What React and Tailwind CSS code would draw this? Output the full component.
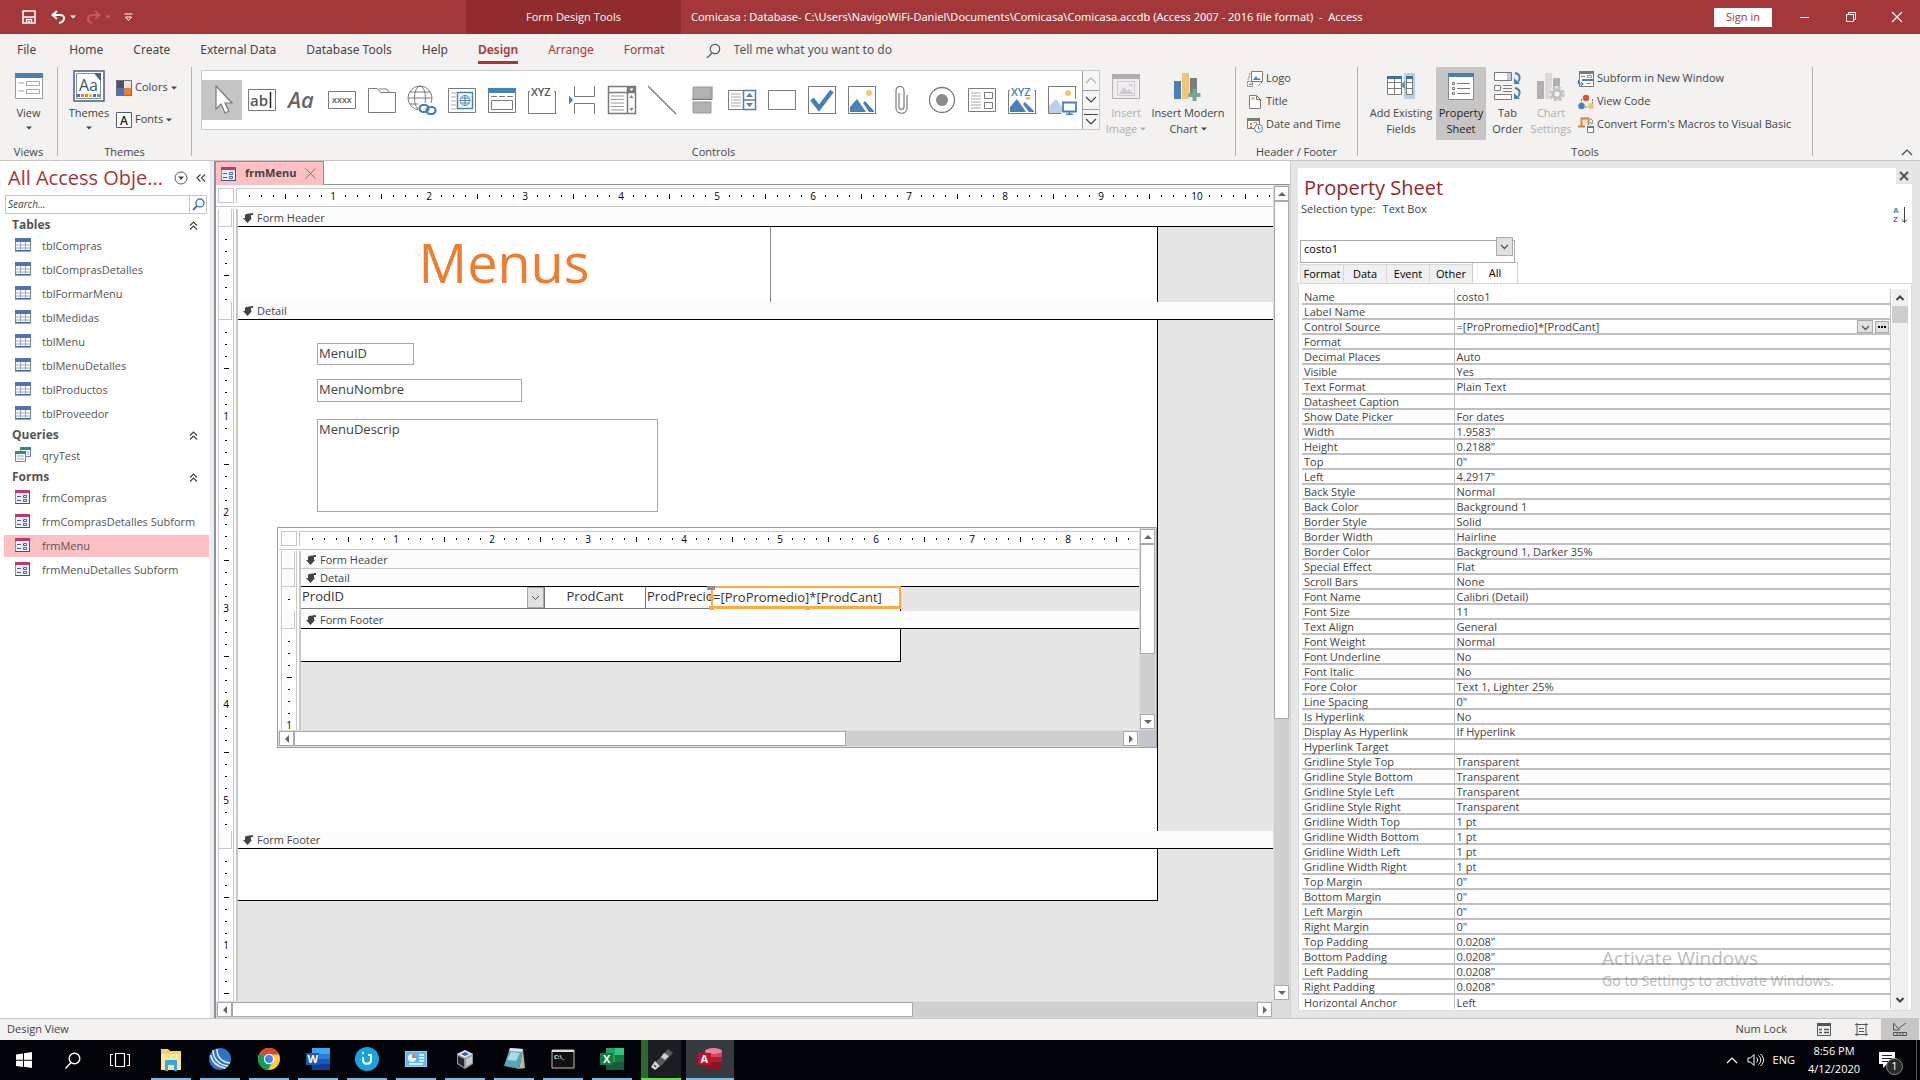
import { useState } from "react";

const TABS = ["File", "Home", "Create", "External Data", "Database Tools", "Help", "Design", "Arrange", "Format"];

const NAV_GROUPS = [
  {
    title: "Tables",
    kind: "table",
    items: ["tblCompras", "tblComprasDetalles", "tblFormarMenu", "tblMedidas", "tblMenu", "tblMenuDetalles", "tblProductos", "tblProveedor"],
  },
  { title: "Queries", kind: "query", items: ["qryTest"] },
  { title: "Forms", kind: "form", items: ["frmCompras", "frmComprasDetalles Subform", "frmMenu", "frmMenuDetalles Subform"] },
];

const PROPERTIES = [
  ["Name", "costo1"],
  ["Label Name", ""],
  ["Control Source", "=[ProPromedio]*[ProdCant]"],
  ["Format", ""],
  ["Decimal Places", "Auto"],
  ["Visible", "Yes"],
  ["Text Format", "Plain Text"],
  ["Datasheet Caption", ""],
  ["Show Date Picker", "For dates"],
  ["Width", '1.9583"'],
  ["Height", '0.2188"'],
  ["Top", '0"'],
  ["Left", '4.2917"'],
  ["Back Style", "Normal"],
  ["Back Color", "Background 1"],
  ["Border Style", "Solid"],
  ["Border Width", "Hairline"],
  ["Border Color", "Background 1, Darker 35%"],
  ["Special Effect", "Flat"],
  ["Scroll Bars", "None"],
  ["Font Name", "Calibri (Detail)"],
  ["Font Size", "11"],
  ["Text Align", "General"],
  ["Font Weight", "Normal"],
  ["Font Underline", "No"],
  ["Font Italic", "No"],
  ["Fore Color", "Text 1, Lighter 25%"],
  ["Line Spacing", '0"'],
  ["Is Hyperlink", "No"],
  ["Display As Hyperlink", "If Hyperlink"],
  ["Hyperlink Target", ""],
  ["Gridline Style Top", "Transparent"],
  ["Gridline Style Bottom", "Transparent"],
  ["Gridline Style Left", "Transparent"],
  ["Gridline Style Right", "Transparent"],
  ["Gridline Width Top", "1 pt"],
  ["Gridline Width Bottom", "1 pt"],
  ["Gridline Width Left", "1 pt"],
  ["Gridline Width Right", "1 pt"],
  ["Top Margin", '0"'],
  ["Bottom Margin", '0"'],
  ["Left Margin", '0"'],
  ["Right Margin", '0"'],
  ["Top Padding", '0.0208"'],
  ["Bottom Padding", '0.0208"'],
  ["Left Padding", '0.0208"'],
  ["Right Padding", '0.0208"'],
  ["Horizontal Anchor", "Left"],
];

const G = "#7a7a7a";
const B = "#4a80b8";
const Y = "#efc77b";

function Svg({ w = 30, h = 30, className = "", children }) {
  return (
    <svg width={w} height={h} viewBox={`0 0 ${w} ${h}`} fill="none" className={`shrink-0 ${className}`} aria-hidden="true">
      {children}
    </svg>
  );
}

function Caret({ className = "" }) {
  return (
    <Svg w={6} h={4} className={className}>
      <path d="M0 0.5h6L3 3.5z" fill="currentColor" />
    </Svg>
  );
}

function Chevron({ className = "", up = false }) {
  return (
    <Svg w={12} h={8} className={className}>
      <path d={up ? "M1 7l5-5 5 5" : "M1 1l5 5 5-5"} stroke="currentColor" strokeWidth="1.2" />
    </Svg>
  );
}

/* ---------- Title bar ---------- */

function TitleBar() {
  return (
    <header className="flex h-[34px] shrink-0 items-stretch bg-[#a4373a] text-[11px] text-white">
      <div className="flex w-[466px] items-center pl-[22px]">
        <button aria-label="Save">
          <Svg w={14} h={14}>
            <path d="M1 1h12v12H1z" stroke="#fff" strokeWidth="1.6" />
            <path d="M1 7h12M4.5 13V9.5h5V13" stroke="#fff" strokeWidth="1.5" />
            <path d="M6 11h2v2H6z" fill="#fff" />
          </Svg>
        </button>
        <button aria-label="Undo" className="ml-[15px] flex items-center gap-[4px]">
          <Svg w={15} h={14}>
            <path d="M6 1L1.5 5 6 9M2 5h7c6 0 5 7-1 8" stroke="#fff" strokeWidth="2" />
          </Svg>
          <Caret />
        </button>
        <button aria-label="Redo" className="ml-[10px] flex items-center gap-[4px] text-[#c0666a]" disabled>
          <Svg w={15} h={14}>
            <path d="M9 1l4.5 4L9 9M13 5H7C1 5 0 11 6 13" stroke="#bd5f62" strokeWidth="2" />
          </Svg>
          <Caret />
        </button>
        <button aria-label="Customize quick access" className="ml-[13px]">
          <Svg w={9} h={9}>
            <path d="M0.5 1h8M1.5 4l3 3.5 3-3.5z" stroke="#fff" />
          </Svg>
        </button>
      </div>
      <div className="flex w-[215px] items-center justify-center bg-[#912b2e]">Form Design Tools</div>
      <h1 className="flex min-w-0 flex-1 items-center pl-[10px] font-['Noto_Sans',sans-serif] whitespace-pre">
        {"Comicasa : Database- C:\\Users\\NavigoWiFi-Daniel\\Documents\\Comicasa\\Comicasa.accdb (Access 2007 - 2016 file format)  -  Access"}
      </h1>
      <div className="flex items-center">
        <button className="h-[19px] w-[58px] bg-white text-[11px] text-[#a4373a]">Sign in</button>
        <button aria-label="Minimize" className="ml-[27px]">
          <Svg w={12} h={12}><path d="M1 6.5h9" stroke="#fff" /></Svg>
        </button>
        <button aria-label="Restore" className="ml-[34px]">
          <Svg w={12} h={12}>
            <path d="M1.5 3.5h7v7h-7zM3.5 3.5v-2h7v7h-2" stroke="#fff" />
          </Svg>
        </button>
        <button aria-label="Close" className="mr-[17px] ml-[34px]">
          <Svg w={12} h={12}><path d="M1 1l10 10M11 1L1 11" stroke="#fff" strokeWidth="1.2" /></Svg>
        </button>
      </div>
    </header>
  );
}

function TabRow() {
  return (
    <nav className="flex h-8 shrink-0 items-center bg-[#f3f2f1] pl-[2px] font-['Noto_Sans',sans-serif] text-xs text-[#444]">
      {TABS.map((tab) => {
        const tool = ["Design", "Arrange", "Format"].includes(tab);
        return (
          <button key={tab} className={`px-[15px] first:pr-[18px] ${tool ? "text-[#a4373a]" : ""}`}>
            <span className={`block h-7 pt-[4px] leading-[20px] ${tab === "Design" ? "border-b-[3px] border-[#a4373a] font-semibold" : ""}`}>
              {tab}
            </span>
          </button>
        );
      })}
      <label className="ml-[26px] flex flex-1 items-center gap-[13px]">
        <Svg w={15} h={15}>
          <circle cx="9" cy="6" r="4.7" stroke="#555" strokeWidth="1.2" />
          <path d="M6 10l-5 5" stroke="#555" strokeWidth="1.2" />
        </Svg>
        <input className="flex-1 bg-transparent outline-none placeholder:text-[#555]" placeholder="Tell me what you want to do" />
      </label>
    </nav>
  );
}

/* ---------- Ribbon ---------- */

function Group({ label, className = "", children }) {
  return (
    <section className={`flex flex-col border-r border-[#b5b3b1] ${className}`}>
      <div className="flex flex-1 items-start">{children}</div>
      <h2 className="h-2 text-center text-[11px] leading-2">{label}</h2>
    </section>
  );
}

function BigButton({ icon, lines, caret, className = "" }) {
  return (
    <button className={`flex h-[73px] flex-col items-center text-[11px] leading-4 ${className}`}>
      <span className="flex h-[38px] items-center">{icon}</span>
      {lines.map((line, i) => (
        <span key={line} className="flex items-center gap-[3px] whitespace-nowrap">
          {line}
          {caret === "inline" && i === lines.length - 1 && <Caret />}
        </span>
      ))}
      {caret === "below" && <Caret className="mt-[5px]" />}
    </button>
  );
}

function SmallButton({ icon, label, caret }) {
  return (
    <button className="flex h-[23px] items-center gap-[3px] text-[11px] whitespace-nowrap">
      {icon}
      {label}
      {caret && <Caret />}
    </button>
  );
}

const CONTROL_ICONS = [
  ["Select", <path d="M9 1v23l5-5 4 9 4-2-4-8h7z" fill="#fff" stroke={G} strokeWidth="1.2" />],
  ["Text Box", <>
    <path d="M1.5 4.5h27v21h-27z" stroke={G} fill="#fff" />
    <text x="3" y="21" fontSize="15" fontWeight="600" fill="#555">ab</text>
    <path d="M23.5 7v16" stroke="#222" strokeWidth="1.5" />
  </>],
  ["Label", <text x="1" y="23" fontSize="22" fontStyle="italic" fontWeight="600" fill="#666">Aa</text>],
  ["Button", <>
    <path d="M1.5 6.5h27v17h-27z" stroke={G} />
    <text x="5" y="18" fontSize="9" fontWeight="600" fill="#666">xxxx</text>
  </>],
  ["Tab Control", <path d="M1.5 27.5v-24h9l3 4h15v20zM12 4h8l2 3" stroke={G} />],
  ["Hyperlink", <>
    <circle cx="13" cy="13" r="12" stroke={G} />
    <ellipse cx="13" cy="13" rx="5.5" ry="12" stroke={G} />
    <path d="M1 13h24M3 7h20M3 19h20" stroke={G} />
    <rect x="11" y="18" width="19" height="12" fill="#fff" />
    <rect x="12.5" y="20" width="9" height="7" rx="3.5" stroke={B} strokeWidth="2.2" />
    <rect x="19.5" y="22" width="9" height="7" rx="3.5" stroke={B} strokeWidth="2.2" />
  </>],
  ["Web Browser", <>
    <path d="M1.5 3.5h27v24h-27z" stroke={G} />
    <path d="M4 8h5M4 12h5M4 16h5M4 20h5M4 24h5" stroke="#aaa" />
    <path d="M10.5 7.5h15v16h-15z" stroke={B} strokeWidth="1.5" />
    <circle cx="18" cy="15.5" r="5" stroke={B} />
    <path d="M13 15.5h10M18 10v11M14 13h8M14 18h8" stroke={B} />
  </>],
  ["Navigation", <>
    <path d="M1.5 3.5h27v24h-27z" stroke={G} />
    <path d="M1 3h28v5H1z" fill={B} />
    <path d="M4 11.5h6M12 11.5h6M20 11.5h6M4.5 15.5h21v9h-21z" stroke={G} />
  </>],
  ["Option Group", <>
    <path d="M3 6.5H1.5v22h27v-22H27" stroke={G} />
    <text x="4" y="11" fontSize="11" fontWeight="600" fill="#555">XYZ</text>
  </>],
  ["Page Break", <>
    <path d="M7.5 1v10.5h20V1M7.5 29V18.5h20V29" stroke={G} />
    <path d="M2 10.5v9l4-4.5z" fill={B} />
  </>],
  ["Combo Box", <>
    <path d="M1.5 1.5h27v27h-27zM1.5 7.5h27M20.5 1.5v27" stroke={G} strokeWidth="1.5" />
    <path d="M4 11h13M4 14.5h13M4 18h13M4 21.5h13M4 25h13" stroke="#999" />
    <path d="M21 2h7v5h-7z" fill={G} />
    <path d="M22.5 3.5h4l-2 2.5z" fill="#fff" />
    <path d="M22.5 13h4l-2-3zM22.5 23h4l-2 3z" fill={G} />
  </>],
  ["Line", <path d="M1 1l28 28" stroke={G} strokeWidth="1.3" />],
  ["Toggle Button", <>
    <path d="M6 2h18v12H6zM6 17h18v11H6z" fill="#b2b2b2" stroke="#999" />
    <path d="M5 14.5h20V1" stroke={G} />
  </>],
  ["List Box", <>
    <path d="M1.5 5.5h15v19h-15z" stroke={G} />
    <path d="M4 9h10M4 12h10M4 15h10M4 18h10M4 21h10" stroke="#aaa" />
    <path d="M16.5 5.5h12v19h-12zM16.5 15h12" stroke={B} strokeWidth="1.5" />
    <path d="M19 12h7l-3.5-4zM19 18h7l-3.5 4z" fill={G} />
  </>],
  ["Rectangle", <path d="M1.5 5.5h27v19h-27z" stroke={G} />],
  ["Check Box", <>
    <path d="M1.5 1.5h27v27h-27z" stroke={G} />
    <path d="M5 14l7 9L25 6" stroke={B} strokeWidth="4.5" />
  </>],
  ["Unbound Object", <>
    <path d="M1.5 1.5h27v27h-27z" stroke={G} />
    <circle cx="22" cy="8" r="3" fill={Y} />
    <path d="M3 27V22l7-8 9 13zM16 18l2-2 9 10v1h-5z" fill={B} />
  </>],
  ["Attachment", <path d="M12 8v14c0 3 5 3 5 0V6c0-6-8-6-8 0v17c0 7 11 7 11 0V10" stroke={G} strokeWidth="1.2" />],
  ["Option Button", <>
    <circle cx="15" cy="15" r="12.5" stroke={G} strokeWidth="1.3" />
    <circle cx="15" cy="15" r="6" fill="#8a8a8a" />
  </>],
  ["Subform", <>
    <path d="M1.5 3.5h27v23h-27z" stroke={G} />
    <path d="M4 8h10M4 11h10M4 14h10M4 17h10M4 20h10M4 23h10" stroke="#aaa" />
    <path d="M17.5 7.5h8v6h-8zM17.5 17.5h8v6h-8z" stroke={G} />
  </>],
  ["Bound Object", <>
    <path d="M3 5.5H1.5v23h27v-23H27" stroke={G} />
    <circle cx="21" cy="12" r="3" fill={Y} />
    <text x="4" y="11" fontSize="11" fontWeight="600" fill={B} stroke="#fff" strokeWidth="2" paintOrder="stroke">XYZ</text>
    <path d="M3 27V22l7-8 9 13zM16 19l2-2 9 9v1h-5z" fill={B} />
  </>],
  ["Image", <>
    <path d="M14 28.5H1.5v-27h27V14" stroke={G} />
    <circle cx="21" cy="8" r="3" fill={Y} />
    <path d="M2 28V21l7-7 6 8v6z" fill="#bcd0e8" />
    <path d="M16 17.5h13v9H16zM22.5 27v2M19 29.5h7" stroke={B} strokeWidth="1.8" />
  </>],
];

function ChartIcon({ muted }) {
  return (
    <Svg w={30} h={30}>
      <path d="M1 10h7v18H1z" fill={muted ? "#b3b1b0" : B} />
      <path d="M9 2h7v26H9z" fill={muted ? "#dcd9d9" : Y} />
      <path d="M17 7h7v15h-7z" fill={muted ? "#b3b1b0" : "#7d7d7d"} />
      {muted ? (
        <>
          <circle cx="21" cy="23" r="8" fill="#f3f2f1" />
          <circle cx="21" cy="23" r="4" stroke="#c3c1c0" strokeWidth="3" />
          <circle cx="21" cy="23" r="6.5" stroke="#c3c1c0" strokeWidth="2.5" strokeDasharray="3 2.1" />
        </>
      ) : (
        <path d="M21.5 18v12M15.5 24h12" stroke="#72a893" strokeWidth="4" />
      )}
    </Svg>
  );
}

function Ribbon() {
  const [active, setActive] = useState("Select");
  return (
    <div className="flex h-[95px] shrink-0 border-b border-[#c8c6c4] bg-[#f3f2f1] pt-px pb-[4px] text-[#444]">
      <Group label="Views" className="w-[58px]">
        <BigButton
          className="w-full"
          caret="below"
          lines={["View"]}
          icon={
            <Svg w={28} h={28}>
              <path d="M0.5 1.5h27v25H0.5z" fill="#fff" stroke="#999" />
              <path d="M0 1h28v5H0z" fill={B} />
              <path d="M3 11h6M11.5 9.5h13v4h-13zM3 19h6M11.5 17.5h13v4h-13z" stroke="#aaa" />
            </Svg>
          }
        />
      </Group>

      <Group label="Themes" className="w-[134px]">
        <BigButton
          className="ml-[8px] w-[46px]"
          caret="below"
          lines={["Themes"]}
          icon={
            <Svg w={32} h={32}>
              <path d="M1 1h30v30H1z" fill="#fff" stroke="#4a5f80" strokeWidth="1.5" />
              <path d="M3.5 3.5h18l6 7v18h-24z" stroke="#7e8ca5" />
              <path d="M21 3l7 8v-8z" fill="#4a5f80" />
              <text x="6" y="21" fontSize="16" fill="#44546a">Aa</text>
              <path d="M4 24h3v3H4z" fill="#4472c4" />
              <path d="M8 24h3v3H8zM12 24h3v3h-3z" fill="#ed7d31" />
              <path d="M16 24h3v3h-3z" fill="#ffc000" />
              <path d="M20 24h3v3h-3z" fill="#4472c4" />
              <path d="M24 24h3v3h-3z" fill="#70ad47" />
            </Svg>
          }
        />
        <div className="flex flex-col gap-[9px] pt-[9px] pl-[4px]">
          <SmallButton
            caret
            label="Colors"
            icon={
              <Svg w={16} h={16}>
                <path d="M0 0h8v8H0z" fill="#44546a" />
                <path d="M8 0h8v8H8z" fill="#e7e6e6" />
                <path d="M0 8h8v8H0z" fill="#4472c4" />
                <path d="M8 8h8v8H8z" fill="#ed7d31" />
                <path d="M0.5 0.5h15v15H0.5z" stroke="#7a6f6a" />
              </Svg>
            }
          />
          <SmallButton
            caret
            label="Fonts"
            icon={
              <Svg w={16} h={16}>
                <path d="M0.5 0.5h15v15H0.5z" fill="#fff" stroke="#4a5f80" />
                <text x="4" y="12.5" fontSize="12" fontWeight="600" fill="#222">A</text>
              </Svg>
            }
          />
        </div>
      </Group>

      <Group label="Controls">
        <div className="mt-[3px] ml-[9px] flex h-[60px] border border-[#c8c8c8] bg-white">
          <div className="flex items-center">
            {CONTROL_ICONS.map(([name, art]) => (
              <button
                key={name}
                aria-label={name}
                onClick={() => setActive(name)}
                className={`flex h-10 w-10 items-center justify-center ${active === name ? "bg-[#c5c5c5]" : ""}`}
              >
                <Svg>{art}</Svg>
              </button>
            ))}
          </div>
          <div className="flex w-[17px] flex-col divide-y divide-[#a0a0a0] border-l border-[#a0a0a0] bg-[#f7f6f5]">
            <button aria-label="Scroll up" className="flex flex-1 items-center justify-center text-[#b0b0b0]"><Chevron up /></button>
            <button aria-label="Scroll down" className="flex flex-1 items-center justify-center"><Chevron /></button>
            <button aria-label="More controls" className="flex flex-1 flex-col items-center justify-center gap-[3px]">
              <span className="h-px w-[14px] bg-[#444]" />
              <Chevron />
            </button>
          </div>
        </div>
        <BigButton
          className="ml-[5px] w-[42px] text-[#b0aeac]"
          caret="inline"
          lines={["Insert", "Image"]}
          icon={
            <Svg w={28} h={28}>
              <path d="M0.5 2.5h27v24H0.5z" fill="#f0ecf0" stroke="#b5b0b5" />
              <path d="M0 2h28v5H0z" fill="#b0adb0" />
              <path d="M5.5 9.5h17v14h-17z" stroke="#cfc8cf" />
              <path d="M7 22l5-7 3 4 2-2 5 5z" fill="#d0c8d0" />
              <circle cx="19" cy="13" r="1.5" fill="#ddd0d0" />
            </Svg>
          }
        />
        <BigButton className="mr-[9px] ml-[3px] w-[76px]" caret="inline" lines={["Insert Modern", "Chart"]} icon={<ChartIcon />} />
      </Group>

      <Group label="Header / Footer" className="w-[122px]">
        <div className="flex flex-col pl-[11px]">
          <SmallButton
            label="Logo"
            icon={
              <Svg w={16} h={16}>
                <path d="M4.5 0.5h11v10h-11z" fill="#fff" stroke={G} />
                <path d="M6 9l3-4 2 3 1-1 2 2z" fill={B} />
                <path d="M3 2L1 9M0.5 10.5h5v5h-5zM15 11l-4 4" stroke={G} strokeDasharray="2 1" />
                <path d="M2 14l2-2 1 2z" fill={B} />
              </Svg>
            }
          />
          <SmallButton
            label="Title"
            icon={
              <Svg w={16} h={16}>
                <path d="M2.5 1.5h7l4 4v9h-11z" fill="#fff" stroke={G} />
                <path d="M9.5 1.5v4h4" stroke={G} />
                <path d="M4 3h4v3H4z" fill={Y} />
              </Svg>
            }
          />
          <SmallButton
            label="Date and Time"
            icon={
              <Svg w={16} h={16}>
                <path d="M0.5 1.5h12v10H0.5z" fill="#fff" stroke={G} />
                <path d="M0 1h13v3H0z" fill={G} />
                <path d="M3 6h2v2H3zM3 9h2v2H3z" fill="#e07b2a" />
                <path d="M6.5 5.5h3v3" stroke="#e07b2a" />
                <circle cx="11.5" cy="11.5" r="4" fill="#fff" stroke={B} />
                <path d="M11.5 9v3h2" stroke={G} />
              </Svg>
            }
          />
        </div>
      </Group>

      <Group label="Tools" className="w-[455px]">
        <BigButton
          className="ml-[8px] w-[70px]"
          lines={["Add Existing", "Fields"]}
          icon={
            <Svg w={30} h={28}>
              <path d="M18 1h11v26H18z" fill="#b9cfe8" />
              <path d="M1.5 4.5h14v18h-14zM1.5 10.5h14M1.5 16.5h14M8.5 4.5v18" fill="#fff" stroke={G} />
              <path d="M1 4h15v3H1z" fill="#3f6fa5" />
              <path d="M20.5 4.5h6v18h-6zM20.5 10.5h6M20.5 16.5h6" fill="#fff" stroke={G} />
              <path d="M20 4h7v3h-7z" fill="#3f6fa5" />
              <path d="M19 9v8l-5-4z" fill="#5f9f85" />
            </Svg>
          }
        />
        <BigButton
          className="w-[50px] bg-[#c8c6c4] text-[#222]"
          lines={["Property", "Sheet"]}
          icon={
            <Svg w={26} h={28}>
              <path d="M0.5 1.5h25v26H0.5z" fill="#fff" stroke="#888" />
              <path d="M0 1h26v4H0z" fill={B} />
              <path d="M9 11.5h13M9 16.5h13M9 21.5h13" stroke={G} />
              <path d="M4.5 10.5h2v2h-2zM4.5 15.5h2v2h-2zM4.5 20.5h2v2h-2z" stroke={G} />
            </Svg>
          }
        />
        <BigButton
          className="w-[43px]"
          lines={["Tab", "Order"]}
          icon={
            <Svg w={30} h={30}>
              <path d="M1.5 1.5h17v8h-17zM1.5 14.5h6v5h-6zM10 14.5h9M10 17.5h9M10 20.5h9M1.5 23.5h17v5h-17z" fill="#fff" stroke={G} />
              <path d="M14 2h4v7h-4z" fill="#b9cfe8" />
              <path d="M22 2c5 1 6 5 3 9M22 17c5 1 6 5 3 9" stroke={B} strokeWidth="2" />
              <path d="M21 7v6h6zM21 22v6h6z" fill={B} />
            </Svg>
          }
        />
        <BigButton className="w-[44px] text-[#b0aeac]" lines={["Chart", "Settings"]} icon={<ChartIcon muted />} />
        <div className="flex flex-col pl-[5px]">
          <SmallButton
            label="Subform in New Window"
            icon={
              <Svg w={16} h={16}>
                <path d="M1.5 0.5h14v15h-14z" fill="#fff" stroke={G} />
                <path d="M1 0h15v3H1zM3 5h4v1H3z" fill={G} />
                <path d="M9.5 4.5h4v2h-4zM3 13h3M8 12.5h5" stroke="#999" />
                <path d="M4 8h11v2H4z" fill={B} />
                <path d="M0.5 9v4h4M3 11l2 2-2 2" stroke={B} />
              </Svg>
            }
          />
          <SmallButton
            label="View Code"
            icon={
              <Svg w={16} h={16}>
                <path d="M3.5 10V4M14.5 10V4M4 13h9" stroke={G} strokeDasharray="2 1" />
                <circle cx="8" cy="4" r="3.2" fill="#d9532c" />
                <circle cx="3.5" cy="12" r="3.2" fill={B} />
                <circle cx="13" cy="12" r="3" fill={Y} />
              </Svg>
            }
          />
          <SmallButton
            label="Convert Form's Macros to Visual Basic"
            icon={
              <Svg w={16} h={16}>
                <path d="M3.5 9V1.5h7V8M0 9.5h7" stroke="#e07b2a" strokeWidth="1.8" />
                <path d="M12 2c3 0 3 3 2 5l-2-2" stroke={G} />
                <path d="M9.5 9.5h6v6h-6z" fill="#fff" stroke={G} />
                <path d="M9 9h7v2H9z" fill={B} />
              </Svg>
            }
          />
        </div>
      </Group>
      <div className="flex flex-1 items-end justify-end pr-[7px]">
        <button aria-label="Collapse the ribbon"><Chevron up /></button>
      </div>
    </div>
  );
}

/* ---------- Navigation pane ---------- */

function ObjectIcon({ kind }) {
  if (kind === "table") {
    return (
      <Svg w={16} h={14}>
        <path d="M0.5 0.5h15v12h-15z" fill="#fff" stroke="#6f87ad" />
        <path d="M0 0h16v4H0z" fill="#5573a9" />
        <path d="M0.5 7h15M0.5 10h15M5.5 4v9M10.5 4v9" stroke="#8fa5c8" />
        <path d="M0 13h16" stroke="#2d4a75" />
      </Svg>
    );
  }
  if (kind === "query") {
    return (
      <Svg w={16} h={15}>
        <path d="M5.5 0.5h10v9h-10z" fill="#fff" stroke="#6f87ad" />
        <path d="M5 0h11v3H5z" fill="#2f8a80" />
        <path d="M0.5 4.5h10v10H0.5z" fill="#fff" stroke="#6f87ad" />
        <path d="M0 4h11v3H0z" fill="#2f8a80" />
        <path d="M2 9h7M2 12h7M12 5h2M12 7h2" stroke="#8fa5c8" />
      </Svg>
    );
  }
  return (
    <Svg w={15} h={14}>
      <path d="M0.5 0.5h14v13H0.5z" fill="#e9eef8" stroke="#7d90b5" />
      <path d="M0 0h15v3H0z" fill="#c0396b" />
      <path d="M2 6.5h4M2 10.5h4M8.5 5.5h3v2h-3zM8.5 9.5h3v2h-3z" stroke="#4a6596" />
      <path d="M0 13.5h15M14.5 3v11" stroke="#3c567f" />
    </Svg>
  );
}

function NavigationPane() {
  return (
    <aside className="flex w-[214px] shrink-0 flex-col border-r-4 border-[#e9edf1] bg-white">
      <div className="flex h-[34px] items-center pr-[4px] pl-[8px]">
        <h2 className="flex-1 text-[20px] whitespace-nowrap text-[#a4373a]">All Access Obje...</h2>
        <button aria-label="Filter objects">
          <Svg w={14} h={14}>
            <circle cx="7" cy="7" r="6" stroke="#555" />
            <path d="M4 5.5h6L7 9z" fill="#444" />
          </Svg>
        </button>
        <button aria-label="Close pane" className="ml-[8px]">
          <Svg w={10} h={10}><path d="M4.5 1.5L1 5l3.5 3.5M9 1.5L5.5 5 9 8.5" stroke="#444" strokeWidth="1.2" /></Svg>
        </button>
      </div>
      <label className="mr-[3px] ml-[5px] flex h-[19px] border border-[#c6c6c6]">
        <input className="min-w-0 flex-1 pl-[2px] text-[10px] italic outline-none placeholder:text-[#444]" placeholder="Search..." aria-label="Search" />
        <span className="flex w-[17px] items-center justify-center border-l border-[#c6c6c6]">
          <Svg w={13} h={13}>
            <circle cx="8" cy="5" r="4" stroke={B} strokeWidth="1.5" />
            <path d="M5 8l-4 4" stroke={B} strokeWidth="2.2" />
          </Svg>
        </span>
      </label>
      <div className="pt-[2px]">
        {NAV_GROUPS.map((group) => (
          <div key={group.title} className="flex flex-col">
            <div className="flex h-[18px] items-center justify-between px-[12px]">
              <h3 className="text-xs font-bold text-[#555]">{group.title}</h3>
              <Svg w={9} h={9}><path d="M1 4.5l3.5-3.5L8 4.5M1 8.5L4.5 5 8 8.5" stroke="#444" strokeWidth="1.2" /></Svg>
            </div>
            {group.items.map((item) => (
              <button
                key={item}
                className={`my-px ml-[4px] flex h-[22px] w-[205px] items-center pl-[11px] text-[11px] text-[#555] ${item === "frmMenu" ? "bg-[#fdc0c3]" : ""}`}
              >
                <span className="w-[27px] pb-[3px]"><ObjectIcon kind={group.kind} /></span>
                {item}
              </button>
            ))}
          </div>
        ))}
      </div>
    </aside>
  );
}

/* ---------- Form designer ---------- */

// One mark every 12px, eight marks to the inch.
function Ruler({ count, vertical }) {
  const marks = Array.from({ length: count }, (_, i) => i + 1);
  return (
    <div className={`flex min-h-0 min-w-0 flex-1 overflow-hidden text-[10px] leading-2 text-black ${vertical ? "flex-col pt-[6px]" : "pl-[6px]"}`}>
      {marks.map((m) => (
        <span key={m} className={`flex shrink-0 items-center justify-center ${vertical ? "h-3 w-full" : "h-full w-3"}`}>
          {m % 8 === 0 ? m / 8 : m % 4 === 0 ? (
            <i className={`bg-black ${vertical ? "h-px w-[5px]" : "h-[5px] w-px"}`} />
          ) : (
            <i className={`bg-black ${vertical ? "h-px w-[2px]" : "h-[2px] w-px"}`} />
          )}
        </span>
      ))}
    </div>
  );
}

function RulerColumn({ children }) {
  return (
    <div className="flex w-[22px] shrink-0 border-r-2 border-[#c8c8c8] bg-white px-[2px]">
      <div className="flex w-4 flex-col border-x border-[#c8c8c8]">{children}</div>
    </div>
  );
}

function Section({ title, body = "", lined = true, grow, marks, children }) {
  return (
    <section className={`flex flex-col ${grow ? "min-h-0 flex-1" : "shrink-0"}`}>
      <div className="flex h-[18px] shrink-0">
        <RulerColumn>
          <span className="mr-px flex-1 border-r border-b border-[#c8c8c8] bg-[#fdfdfd]" />
        </RulerColumn>
        <h3 className={`flex flex-1 items-center gap-[4px] border-b bg-[#fcfcfc] pt-px pl-[5px] text-[11px] text-[#444] ${lined ? "border-black" : "border-[#c8c8c8]"}`}>
          <Svg w={10} h={10}>
            <path d="M3 1l7-1v2H8v3h1l-4.5 5L0 5h2V2z" fill="#444" />
          </Svg>
          {title}
        </h3>
      </div>
      {children && (
        <div className={`flex ${grow ? "min-h-0 flex-1" : body}`}>
          <RulerColumn><Ruler vertical count={marks} /></RulerColumn>
          <div className="min-w-0 flex-1 bg-[#e6e6e6]">{children}</div>
        </div>
      )}
    </section>
  );
}

function RulerRow({ marks }) {
  return (
    <div className="flex h-[22px] shrink-0 border-b border-[#c8c8c8] bg-white py-[3px]">
      <span className="mx-[2px] w-4 shrink-0 border border-[#c8c8c8] bg-[#fdfdfd]" />
      <div className="flex min-w-0 flex-1 border-t border-l border-[#c8c8c8]">
        <Ruler count={marks} />
      </div>
    </div>
  );
}

function ScrollBar({ vertical, thumb, className = "" }) {
  const btn = "flex h-[15px] w-[15px] shrink-0 items-center justify-center border border-[#a9a9a9] bg-white";
  return (
    <div className={`flex shrink-0 border border-[#dcdcdc] bg-[#cfcfcf] ${vertical ? "w-[17px] flex-col" : "h-[17px]"} ${className}`}>
      <button className={btn} aria-label={vertical ? "Scroll up" : "Scroll left"}>
        <Svg w={8} h={8}><path d={vertical ? "M0 6h8L4 2z" : "M6 0v8L2 4z"} fill="#666" /></Svg>
      </button>
      <div className={`border border-[#a9a9a9] bg-white ${thumb}`} />
      <div className="flex-1" />
      <button className={btn} aria-label={vertical ? "Scroll down" : "Scroll right"}>
        <Svg w={8} h={8}><path d={vertical ? "M0 2h8L4 6z" : "M2 0v8l4-4z"} fill="#666" /></Svg>
      </button>
    </div>
  );
}

function Subform() {
  return (
    <div className="absolute top-[207px] left-[39px] flex h-[221px] w-[880px] flex-col border border-[#a0a0a0] bg-white">
      <div className="flex min-h-0 flex-1">
        <div className="flex min-w-0 flex-1 flex-col pl-px">
          <RulerRow marks={69} />
          <div className="flex min-h-0 flex-1 flex-col pt-px">
            <Section title="Form Header" lined={false} />
            <Section title="Detail" body="h-6" marks={1}>
              <div className="relative flex h-full w-[600px] border-r border-black bg-white text-[13px] leading-5 text-[#333]">
                <div className="flex h-[22px] w-[244px] border-r border-b border-[#777]">
                  <input aria-label="ProdID" defaultValue="ProdID" className="min-w-0 flex-1 pb-[3px] pl-px outline-none" />
                  <button aria-label="Open ProdID list" className="flex w-[17px] items-center justify-center border border-[#aaa] bg-[#e1e1e1]">
                    <Svg w={9} h={6}><path d="M1 1l3.5 3.5L8 1" stroke="#555" /></Svg>
                  </button>
                </div>
                <input aria-label="ProdCant" defaultValue="ProdCant" className="h-[22px] w-[100px] border-b border-[#777] pb-[3px] text-center outline-none" />
                <input aria-label="ProdPrecio" defaultValue="ProdPrecio" className="h-[22px] w-[70px] border-b border-l border-[#777] pb-[3px] pl-px outline-none" />
                <input
                  aria-label="costo1"
                  defaultValue="=[ProPromedio]*[ProdCant]"
                  className="absolute -top-px left-[410px] h-[23px] w-[190px] border-2 border-b-[3px] border-[#ffa940] bg-white pb-px outline-none"
                />
                <i className="absolute -top-px left-[406px] h-[4px] w-[8px] bg-[#8c8f98]" />
                <i className="absolute top-[8px] left-[408px] h-[5px] w-[5px] bg-[#ffa940]" />
                <i className="absolute top-[19px] left-[408px] h-[4px] w-[5px] bg-[#ffa940]" />
                <i className="absolute top-[19px] left-[504px] h-[4px] w-[5px] bg-[#ffa940]" />
              </div>
            </Section>
            <Section title="Form Footer" grow marks={8}>
              <div className="h-[33px] w-[600px] border-r border-b border-black bg-white" />
            </Section>
          </div>
        </div>
        <ScrollBar vertical thumb="h-[110px]" />
      </div>
      <div className="flex">
        <ScrollBar thumb="w-[552px]" className="flex-1" />
        <span className="w-[17px] bg-[#c4c6cf]" />
      </div>
    </div>
  );
}

function FormDesigner() {
  return (
    <main className="flex min-w-0 flex-1 flex-col border-l-2 border-[#8e9196] bg-white">
      <div className="flex h-6 shrink-0">
        <div className="flex w-[108px] items-center border-t border-r border-[#8e9196] bg-[#fdc0c3] pl-[5px]">
          <ObjectIcon kind="form" />
          <span className="ml-[9px] flex-1 text-[11px] font-bold text-[#444]">frmMenu</span>
          <button aria-label="Close frmMenu" className="mr-[7px]">
            <Svg w={11} h={11}><path d="M0.5 0.5l10 10M10.5 0.5l-10 10" stroke="#777" /></Svg>
          </button>
        </div>
        <div className="flex-1 border-b border-[#8e9196] bg-white" />
      </div>
      <div className="flex min-h-0 flex-1">
        <div className="flex min-w-0 flex-1 flex-col">
          <RulerRow marks={86} />
          <div className="flex min-h-0 flex-1 flex-col pt-[2px]">
            <Section title="Form Header" body="h-[75px]" marks={6}>
              <div className="h-full w-[920px] border-r border-black bg-white">
                <div className="flex h-full w-[533px] items-center justify-center border-r border-[#888] pb-[6px] text-[54px] leading-[60px] text-[#ed7d31]">
                  Menus
                </div>
              </div>
            </Section>
            <Section title="Detail" body="h-[511px]" marks={42}>
              <div className="relative h-full w-[920px] border-r border-black bg-white text-[13px] leading-5 text-[#404040]">
                <input aria-label="MenuID" defaultValue="MenuID" className="absolute top-[23px] left-[79px] h-[22px] w-[97px] border border-[#a6a6a6] px-px pb-[2px] outline-none" />
                <input aria-label="MenuNombre" defaultValue="MenuNombre" className="absolute top-[59px] left-[79px] h-[23px] w-[205px] border border-[#a6a6a6] px-px pb-[3px] outline-none" />
                <textarea aria-label="MenuDescrip" defaultValue="MenuDescrip" className="absolute top-[99px] left-[79px] h-[93px] w-[341px] resize-none border border-[#a6a6a6] px-px leading-[18px] outline-none" />
                <Subform />
              </div>
            </Section>
            <Section title="Form Footer" grow marks={12}>
              <div className="h-[52px] w-[920px] border-r border-b border-black bg-white" />
            </Section>
          </div>
        </div>
        <ScrollBar vertical thumb="h-[518px]" />
      </div>
      <div className="flex bg-[#dcdcdc]">
        <ScrollBar thumb="w-[681px]" className="flex-1" />
        <span className="w-[17px]" />
      </div>
    </main>
  );
}

/* ---------- Property sheet ---------- */

function PropertySheet() {
  return (
    <aside className="relative flex w-[630px] shrink-0 flex-col border-l border-[#d0d0d0] bg-[#e6e6e6] pt-[7px] pr-[8px] pb-[7px] pl-[7px]">
      <div className="flex min-h-0 flex-1 flex-col bg-white">
        <div className="flex h-[67px] shrink-0">
          <div className="flex-1 pl-[3px]">
            <h2 className="pt-[8px] pl-[3px] text-[20px] leading-6 text-[#93282b]">Property Sheet</h2>
            <p className="flex gap-[7px] text-[11px] leading-[18px] text-[#444]">
              <span>Selection type:</span>
              <span>Text Box</span>
            </p>
          </div>
          <div className="flex flex-col items-end">
            <button aria-label="Close property sheet" className="flex h-4 w-4 items-center justify-center bg-[#e6e6e6]">
              <Svg w={10} h={10}><path d="M1 1l8 8M9 1L1 9" stroke="#555" strokeWidth="2" /></Svg>
            </button>
            <button aria-label="Toggle sort" className="mt-[21px] mr-[4px] font-['Liberation_Sans',sans-serif] font-bold">
              <Svg w={16} h={20}>
                <text x="1" y="8" fontSize="8" fill={B}>A</text>
                <text x="1" y="17" fontSize="8" fill="#8a4fb5">Z</text>
                <path d="M12.5 2v15M10 14.5l2.5 3 2.5-3" stroke="#444" />
              </Svg>
            </button>
          </div>
        </div>
        <div className="relative ml-[2px] h-[23px] w-[215px] shrink-0">
          <select aria-label="Selected control" className="h-full w-full appearance-none border border-[#a9a9b0] bg-white pb-[5px] pl-[3px] text-[11px] leading-3 text-black outline-none">
            <option>costo1</option>
          </select>
          <span className="pointer-events-none absolute top-[2px] right-[2px] flex h-[19px] w-[17px] items-center justify-center border border-[#aaa] bg-[#e1e1e1]">
            <Svg w={9} h={6}><path d="M1 1l3.5 3.5L8 1" stroke="#555" strokeWidth="1.3" /></Svg>
          </span>
        </div>
        <div className="flex h-[25px] shrink-0 items-end pl-[2px] text-[11px] text-black">
          {["Format", "Data", "Event", "Other"].map((tab) => (
            <button key={tab} className="h-[19px] w-[43px] border-t border-l border-[#d9d9d9] bg-[#f0f0f0] pt-px">{tab}</button>
          ))}
          <button className="-mb-px h-[22px] w-[46px] border border-b-0 border-[#d0d0d0] bg-white">All</button>
        </div>
        <div className="flex min-h-0 flex-1 overflow-hidden border border-[#dcdcdc] pt-[5px] pr-[3px] pl-[3px]">
          <table className="w-full table-fixed border-collapse self-start text-[11px] text-[#444]">
            <tbody>
              {PROPERTIES.map(([name, value]) => (
                <tr key={name} className="h-[15px] border-b-2 border-[#c0c0c0] last:border-b-0">
                  <th scope="row" className="w-[152px] border-r border-[#c0c0c0] p-0 pl-[2px] text-left font-normal leading-[13px]">{name}</th>
                  <td className="border-r border-[#c0c0c0] p-0 pl-[2px] leading-[13px]">
                    <div className="flex h-[13px] items-center">
                      <span className="flex-1">{value}</span>
                      {name === "Control Source" && (
                        <>
                          <button aria-label="Choose field" className="flex h-[13px] w-4 items-end justify-center border border-[#aaa] bg-[#e1e1e1] pb-px">
                            <Svg w={9} h={6}><path d="M1 1l3.5 3.5L8 1" stroke="#555" strokeWidth="1.3" /></Svg>
                          </button>
                          <button aria-label="Build expression" className="mr-px ml-[2px] flex h-[12px] w-[14px] items-center justify-center gap-px border border-[#aaa] bg-[#e1e1e1]">
                            <i className="h-[2px] w-[2px] bg-black" />
                            <i className="h-[2px] w-[2px] bg-black" />
                            <i className="h-[2px] w-[2px] bg-black" />
                          </button>
                        </>
                      )}
                    </div>
                  </td>
                </tr>
              ))}
            </tbody>
          </table>
          <div className="ml-px flex w-4 shrink-0 flex-col items-center bg-[#f0f0f0] pt-[6px] text-[#444]">
            <Svg w={8} h={6}><path d="M0.5 5L4 1.5 7.5 5" stroke="#444" strokeWidth="2" /></Svg>
            <i className="mt-[5px] h-[17px] w-full bg-[#cdcdcd]" />
            <div className="flex-1" />
            <Svg w={8} h={6} className="mb-[7px]"><path d="M0.5 1L4 4.5 7.5 1" stroke="#444" strokeWidth="2" /></Svg>
          </div>
        </div>
      </div>
      <div className="pointer-events-none absolute right-[86px] bottom-[26px] text-[#777]/50">
        <p className="text-[19px] leading-6">Activate Windows</p>
        <p className="font-['Noto_Sans',sans-serif] text-[14px] leading-[22px]">Go to Settings to activate Windows.</p>
      </div>
    </aside>
  );
}

/* ---------- Status bar and taskbar ---------- */

function StatusBar() {
  return (
    <footer className="flex h-[22px] shrink-0 items-center border-t border-[#c8c6c4] bg-[#f3f2f1] pl-[7px] text-[11px] text-[#444]">
      <span className="flex-1">Design View</span>
      <span>Num Lock</span>
      <button aria-label="Form View" className="ml-[30px]">
        <Svg w={14} h={13}>
          <path d="M0.5 0.5h13v12H0.5z" stroke="#555" />
          <path d="M0 0h14v3H0z" fill="#555" />
          <path d="M2 6.5h3M7 6.5h5M2 9.5h3M7 9.5h5" stroke="#555" strokeWidth="1.5" />
        </Svg>
      </button>
      <button aria-label="Layout View" className="ml-[24px]">
        <Svg w={13} h={13}>
          <path d="M2 0v13M11 0v13M0 1.5h13M0 11.5h13M4 5.5h5M4 8.5h5" stroke="#555" />
        </Svg>
      </button>
      <button aria-label="Design View" className="ml-[13px] flex h-full w-[38px] items-center justify-center bg-[#c8c6c4]">
        <Svg w={14} h={13}>
          <path d="M0.5 0v7h6zM6 5l7-5M0.5 9.5h13v3H0.5zM4 10v2M7 10v2M10 10v2" stroke="#555" />
        </Svg>
      </button>
      <span className="w-px" />
    </footer>
  );
}

const APPS = [
  ["File Explorer", <>
    <path d="M2 3h7l2 2h11v18H2z" fill="#f5d06f" />
    <path d="M2 8h20v16H2z" fill="#ffe49a" />
    <path d="M6 25V14h12v11h-3v-6H9v6z" fill="#37a8e0" />
  </>],
  ["Browser", <>
    <circle cx="12" cy="13" r="11" fill="#2f74c8" />
    <path d="M5 4c0 9 6 15 15 16M9 3c0 9 5 13 13 14M2.5 9c2 8 8 12 15 13" stroke="#e8f1fb" strokeWidth="1.5" />
  </>],
  ["Chrome", <>
    <circle cx="12" cy="13" r="11" fill="#ffcd40" />
    <path d="M12 13L2.5 7.5A11 11 0 0 1 22 8.5H12z" fill="#db4437" />
    <path d="M12 13L2.5 7.5A11 11 0 0 0 11 24l5-9z" fill="#0f9d58" />
    <circle cx="12" cy="13" r="5.2" fill="#fff" />
    <circle cx="12" cy="13" r="4" fill="#4285f4" />
  </>],
  ["Word", <>
    <path d="M6 2h18v6H6z" fill="#41a5ee" />
    <path d="M6 8h18v5H6z" fill="#2b7cd3" />
    <path d="M6 13h18v5H6z" fill="#185abd" />
    <path d="M6 18h18v6H6z" fill="#103f91" />
    <path d="M0 7h13v12H0z" fill="#185abd" />
    <text x="1.5" y="17" fontSize="11" fontWeight="700" fill="#fff">W</text>
  </>],
  ["Updater", <>
    <circle cx="12" cy="13" r="12" fill="#16a3e0" />
    <path d="M8 11v3c0 5 8 5 8 0V9h-3" stroke="#fff" strokeWidth="2" />
    <circle cx="8" cy="7" r="1.2" fill="#fff" />
  </>],
  ["Control Panel", <>
    <path d="M1 5h22v16H1z" fill="#8fd0f7" />
    <path d="M2 6h20v14H2z" fill="#5db8ef" />
    <circle cx="8" cy="12" r="4" fill="#e9f6ff" />
    <path d="M8 12V8a4 4 0 0 1 4 4z" fill="#e0822c" />
    <path d="M15 9h5M15 12h5M15 15h5M5 18h14" stroke="#fff" strokeWidth="1.3" />
  </>],
  ["VirtualBox", <>
    <path d="M12 4l8 4v10l-8 5-8-5V8z" fill="#8d929c" />
    <path d="M12 4l8 4-8 4-8-4z" fill="#dfe3ea" />
    <path d="M12 6l4 2-4 2-4-2z" fill="#2f62c8" />
    <path d="M5 10l6 3v8l-6-4z" fill="#1f2430" />
    <path d="M13 13l6-3v7l-6 4z" fill="#c3c8d2" />
  </>],
  ["Notepad", <>
    <path d="M8 2l13 1-4 20-15-3z" fill="#58a5b8" />
    <path d="M8 2l13 1-1 3L7 5z" fill="#dfe7e9" />
    <path d="M9 6l9 1-4 8-9-1z" fill="#a8dbe6" />
    <path d="M21 3l2 19-6 1z" fill="#b9b3a3" />
  </>],
  ["Command Prompt", <>
    <path d="M1 4h22v18H1z" fill="#111" stroke="#bbb" />
    <path d="M1 4h22v2H1z" fill="#ddd" />
    <text x="3" y="13" fontSize="6" fontWeight="700" fill="#eee">C:\_</text>
  </>],
  ["Excel", <>
    <path d="M6 2h9v22H6z" fill="#21a366" />
    <path d="M15 2h9v7h-9z" fill="#33c481" />
    <path d="M15 9h9v7h-9z" fill="#107c41" />
    <path d="M6 16h18v8H6z" fill="#185c37" />
    <path d="M0 7h13v12H0z" fill="#107c41" />
    <text x="3" y="17" fontSize="11" fontWeight="700" fill="#fff">X</text>
  </>],
  ["USB Tool", <>
    <path d="M19 3l5 4-12 13-5-4z" fill="#55585c" />
    <path d="M15 7l5 3-4 4-4-3z" fill="#d0d0d0" />
    <path d="M6 15l5 5-5 4-4-3z" fill="#d5d5d5" />
    <path d="M5 19l2 2" stroke="#444" strokeWidth="1.5" />
  </>],
  ["Access", <>
    <path d="M7 5h17v16H7z" fill="#b01c36" />
    <path d="M7 16h17v4c0 5-17 5-17 0z" fill="#8a1428" />
    <path d="M7 5h17v6H7z" fill="#d5475c" />
    <ellipse cx="15.5" cy="5" rx="8.5" ry="3" fill="#ea8595" />
    <path d="M0 7h13v12H0z" fill="#c00f2c" />
    <text x="2.5" y="17" fontSize="11" fontWeight="700" fill="#fff">A</text>
  </>],
];

const APP_CELL = {
  "USB Tool": "w-10 border-[#5fe043] bg-linear-to-r from-[#2a6a2c] from-18% to-[#1b1d22] to-18%",
  Access: "w-12 border-[#7fb9e8] bg-[#36393d]",
};

function Taskbar() {
  return (
    <div className="flex h-10 shrink-0 items-stretch bg-[#020409] text-[11px] text-white">
      <button aria-label="Start" className="flex w-12 items-center justify-center">
        <Svg w={16} h={16}>
          <path d="M0 2.5l7-1v6.3H0zM8 1.3L16 0v7.8H8zM0 8.7h7V15l-7-1zM8 8.7h8V16l-8-1.2z" fill="#fff" />
        </Svg>
      </button>
      <button aria-label="Search" className="flex w-12 items-center justify-center">
        <Svg w={17} h={17}>
          <circle cx="10.5" cy="6.5" r="5.3" stroke="#fff" strokeWidth="1.4" />
          <path d="M7 10.5l-5.5 6" stroke="#fff" strokeWidth="1.4" />
        </Svg>
      </button>
      <button aria-label="Task View" className="flex w-12 items-center justify-center">
        <Svg w={20} h={16}>
          <path d="M5.5 1.5h9v13h-9zM3 2.5H0.5v11H3M17 2.5h2.5v11H17" stroke="#fff" strokeWidth="1.2" />
        </Svg>
      </button>
      <div className="ml-[3px] flex">
        {APPS.map(([name, art]) => (
          <button key={name} aria-label={name} className="mr-px flex w-12 items-stretch justify-center">
            <span className={`flex items-center justify-center border-b-2 ${APP_CELL[name] || "w-10 border-[#7fb9e8]"}`}>
              <Svg w={25} h={26}>{art}</Svg>
            </span>
          </button>
        ))}
      </div>
      <div className="flex flex-1 items-center justify-end">
        <button aria-label="Show hidden icons" className="mr-[9px]"><Chevron up /></button>
        <button aria-label="Volume" className="mr-[9px]">
          <Svg w={17} h={14}>
            <path d="M1 5h2.5L7 1.5v11L3.5 9H1z" stroke="#fff" />
            <path d="M9.5 4.5c1.5 1.5 1.5 3.5 0 5M11.5 2.5c3 2.5 3 6.5 0 9M13.5 1c4 3.5 4 8.5 0 12" stroke="#fff" />
          </Svg>
        </button>
        <span>ENG</span>
        <time className="mx-[10px] w-[58px] text-center leading-[18px]">
          8:56 PM
          <br />
          4/12/2020
        </time>
        <button aria-label="Notifications" className="relative mr-5 ml-[5px]">
          <Svg w={18} h={18}>
            <path d="M1 1h16v12H9l-4 4v-4H1z" fill="#fff" />
            <path d="M4 4.5h10M4 7.5h10M4 10.5h6" stroke="#222" />
          </Svg>
          <span className="absolute top-[7px] left-[8px] flex h-[17px] w-[17px] items-center justify-center rounded-full border border-[#888] bg-[#2a2a2a] text-[11px]">1</span>
        </button>
        <span className="h-full w-px bg-[#555]" />
        <span className="w-[3px]" />
      </div>
    </div>
  );
}

export default function App() {
  return (
    <div className="flex h-screen flex-col overflow-hidden bg-[#f3f2f1] font-['Open_Sans',sans-serif]">
      <TitleBar />
      <TabRow />
      <Ribbon />
      <div className="flex min-h-0 flex-1">
        <NavigationPane />
        <FormDesigner />
        <PropertySheet />
      </div>
      <StatusBar />
      <Taskbar />
    </div>
  );
}
